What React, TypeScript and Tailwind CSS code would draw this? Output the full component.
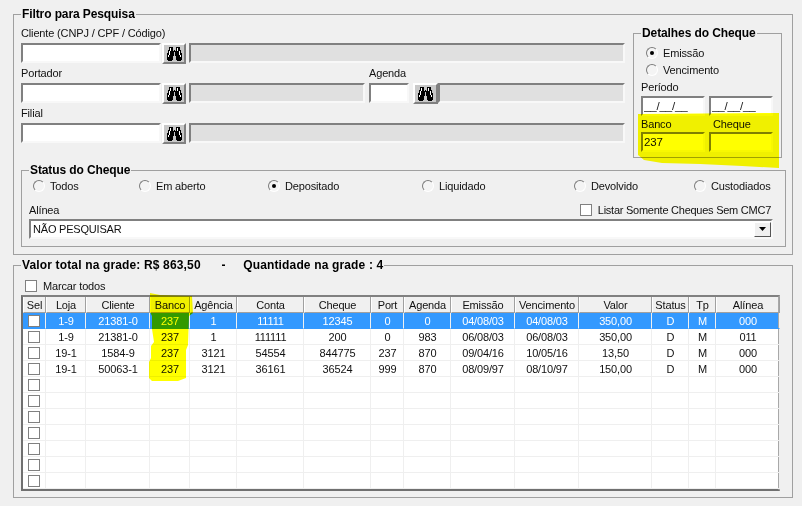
import type { ReactNode } from "react";

const columns = [
  { title: "Sel", width: 23 },
  { title: "Loja", width: 40 },
  { title: "Cliente", width: 64 },
  { title: "Banco", width: 40 },
  { title: "Agência", width: 47 },
  { title: "Conta", width: 67 },
  { title: "Cheque", width: 67 },
  { title: "Port", width: 33 },
  { title: "Agenda", width: 47 },
  { title: "Emissão", width: 64 },
  { title: "Vencimento", width: 64 },
  { title: "Valor", width: 73 },
  { title: "Status", width: 37 },
  { title: "Tp", width: 27 },
  { title: "Alínea", width: 64 },
];

const rows = [
  ["1-9", "21381-0", "237", "1", "11111", "12345", "0", "0", "04/08/03", "04/08/03", "350,00", "D", "M", "000"],
  ["1-9", "21381-0", "237", "1", "111111", "200", "0", "983", "06/08/03", "06/08/03", "350,00", "D", "M", "011"],
  ["19-1", "1584-9", "237", "3121", "54554", "844775", "237", "870", "09/04/16", "10/05/16", "13,50", "D", "M", "000"],
  ["19-1", "50063-1", "237", "3121", "36161", "36524", "999", "870", "08/09/97", "08/10/97", "150,00", "D", "M", "000"],
  ...Array.from({ length: 7 }, () => Array.from({ length: 14 }, () => "")),
];

const gridCols =
  "grid grid-cols-[23px_40px_64px_40px_47px_67px_67px_33px_47px_64px_64px_73px_37px_27px_64px]";

const sunken =
  "block h-5 border-2 border-t-[#808080] border-l-[#808080] border-r-[#f8f8f8] border-b-[#f8f8f8] px-[1px] text-[11.5px] outline-none";

// o = white highlight
const binoculars = [
  "..####...####..",
  "..#o##...#o##..",
  "..#o##...#o##..",
  ".##o##.#.#o###.",
  ".#o#########o#.",
  ".#o####.####o#.",
  "##o####.####o##",
  "##o####.####o##",
  "#o#####.#####o#",
  "#o####...####o#",
  "######...######",
  "######...######",
  "######...######",
  ".####.....####.",
];

function Binoculars() {
  return (
    <svg width="15" height="14" viewBox="0 0 15 14" shapeRendering="crispEdges">
      {binoculars.map((line, y) =>
        line.split("").map((c, x) =>
          c === "." ? null : <rect key={`${x}-${y}`} x={x} y={y} width="1" height="1" fill={c === "#" ? "#000" : "#fff"} />
        )
      )}
    </svg>
  );
}

function SearchButton({ wide }: { wide?: boolean }) {
  return (
    <button
      className={`flex h-[21px] ${wide ? "w-[25px]" : "w-6"} shrink-0 items-center justify-center border-2 border-t-white border-l-white border-r-[#808080] border-b-[#808080] bg-[#c8c8c8]`}
    >
      <Binoculars />
    </button>
  );
}

function Group({
  title,
  className,
  titleClass,
  children,
}: {
  title: string;
  className?: string;
  titleClass?: string;
  children: ReactNode;
}) {
  return (
    <fieldset className={`min-w-0 border border-[#a0a0a0] ${className ?? ""}`}>
      <legend className={`whitespace-pre px-[1px] text-[12px] font-bold leading-[14px] text-black ${titleClass ?? "tracking-[-0.1px]"}`}>
        {title}
      </legend>
      {children}
    </fieldset>
  );
}

function Radio({ label, checked, className }: { label: string; checked?: boolean; className?: string }) {
  return (
    <div className={`flex h-[14px] items-center gap-[5px] ${className ?? ""}`}>
      <span className="flex size-3 items-center justify-center rounded-full border border-t-[#7c7c7c] border-l-[#7c7c7c] border-r-white border-b-white bg-[#f4f4f4]">
        {checked && <span className="size-[4px] rounded-full bg-black" />}
      </span>
      <span>{label}</span>
    </div>
  );
}

function Check({ className }: { className?: string }) {
  return <span className={`block size-3 border border-[#808080] bg-white ${className ?? ""}`} />;
}

function Field({ label, children }: { label: string; children: ReactNode }) {
  return (
    <div className="h-10">
      <div className="h-[17px] leading-[14px]">{label}</div>
      {children}
    </div>
  );
}

export default function App() {
  return (
    <div className="relative isolate h-[506px] w-[802px] overflow-hidden bg-[#f0f0f0] px-[13px] pt-[7px] font-['Liberation_Sans',sans-serif] text-[11px] tracking-[-0.15px] text-[#111]">
      <Group title="Filtro para Pesquisa" className="h-[248px] w-[780px] pl-[7px] pr-[6px]">
        <div className="flex h-[142px] items-start">
          <div className="w-[604px] pt-[5px]">
            <Field label="Cliente (CNPJ / CPF / Código)">
              <div className="flex">
                <input readOnly className={`${sunken} w-[140px] bg-white`} />
                <div className="ml-[1px]">
                  <SearchButton />
                </div>
                <input readOnly className={`${sunken} ml-[3px] min-w-0 flex-1 bg-[#e0e0e0]`} />
              </div>
            </Field>
            <div className="flex">
              <div className="w-[344px]">
                <Field label="Portador">
                  <div className="flex">
                    <input readOnly className={`${sunken} w-[140px] bg-white`} />
                    <div className="ml-[1px]">
                      <SearchButton />
                    </div>
                    <input readOnly className={`${sunken} ml-[3px] w-[176px] bg-[#e0e0e0]`} />
                  </div>
                </Field>
              </div>
              <div className="ml-[4px] flex-1">
                <Field label="Agenda">
                  <div className="flex">
                    <input readOnly className={`${sunken} w-10 bg-white`} />
                    <div className="ml-1">
                      <SearchButton wide />
                    </div>
                    <input readOnly className={`${sunken} min-w-0 flex-1 bg-[#e0e0e0]`} />
                  </div>
                </Field>
              </div>
            </div>
            <Field label="Filial">
              <div className="flex">
                <input readOnly className={`${sunken} w-[140px] bg-white`} />
                <div className="ml-[1px]">
                  <SearchButton />
                </div>
                <input readOnly className={`${sunken} ml-[3px] min-w-0 flex-1 bg-[#e0e0e0]`} />
              </div>
            </Field>
          </div>

          <Group title="Detalhes do Cheque" className="ml-2 mt-[5px] h-[132px] w-[149px] pl-[7px]">
            <div className="flex flex-col gap-[3px] pl-[5px] pt-[6px]">
              <Radio label="Emissão" checked />
              <Radio label="Vencimento" />
            </div>
            <div className="mt-[2px] h-[16px] leading-[16px]">Período</div>
            <div className="mt-[1px] flex gap-1">
              <input readOnly value="__/__/__" className={`${sunken} w-16 bg-white`} />
              <input readOnly value="__/__/__" className={`${sunken} w-16 bg-white`} />
            </div>
            <div className="mt-[1px] flex h-[15px] leading-[15px]">
              <span className="w-[72px]">Banco</span>
              <span>Cheque</span>
            </div>
            <div className="flex gap-1">
              <input readOnly value="237" className={`${sunken} w-16 bg-white`} />
              <input readOnly className={`${sunken} w-16 bg-white`} />
            </div>
          </Group>
        </div>

        <Group title="Status do Cheque" className="w-[765px] pb-[7px] pl-[7px] pr-[11px]">
          <div className="flex pl-1 pt-[2px]">
            <Radio label="Todos" className="w-[106px]" />
            <Radio label="Em aberto" className="w-[129px]" />
            <Radio label="Depositado" checked className="w-[154px]" />
            <Radio label="Liquidado" className="w-[152px]" />
            <Radio label="Devolvido" className="w-[120px]" />
            <Radio label="Custodiados" />
          </div>
          <div className="mt-[10px] flex h-[16px] justify-between">
            <span className="leading-[14px]">Alínea</span>
            <div className="mr-[3px] flex h-[14px] items-center gap-[6px] tracking-[-0.25px]">
              <Check />
              <span>Listar Somente Cheques Sem CMC7</span>
            </div>
          </div>
          <div className="flex h-5 w-[744px] items-center justify-between border-2 border-t-[#808080] border-l-[#808080] border-r-[#f8f8f8] border-b-[#f8f8f8] bg-white pl-[2px]">
            <span className="tracking-[-0.2px]">NÃO PESQUISAR</span>
            <span className="flex h-[15px] w-[17px] items-center justify-center border border-t-white border-l-white border-r-[#555] border-b-[#555] bg-[#f0f0f0]">
              <svg width="7" height="4" viewBox="0 0 7 4">
                <path d="M0 0h7L3.5 4z" fill="#000" />
              </svg>
            </span>
          </div>
        </Group>
      </Group>

      <Group
        title="Valor total na grade: R$ 863,50      -     Quantidade na grade : 4"
        titleClass="tracking-[0.15px]"
        className="mt-[3px] h-[240px] w-[780px] pl-[7px]"
      >
        <div className="mt-[7px] flex h-[14px] items-center gap-[6px] pl-1">
          <Check />
          <span>Marcar todos</span>
        </div>
        <div className="mt-[2px] w-[759px] border-2 border-t-[#808080] border-l-[#707070] border-r-[#a8a8a8] border-b-[#707070] bg-white">
          <div className={`${gridCols} h-4 bg-[#f0f0f0]`}>
            {columns.map((c) => (
              <div
                key={c.title}
                className="overflow-hidden whitespace-nowrap border-l border-r border-b border-l-white border-r-[#a0a0a0] border-b-[#a0a0a0] pt-[1px] text-center leading-[14px]"
              >
                {c.title}
              </div>
            ))}
          </div>
          {rows.map((row, i) => (
            <div key={i} className={`${gridCols} h-4 ${i === 0 ? "bg-[#3399ff] text-white" : ""}`}>
              <div className={`flex items-center justify-center border-r border-b pr-[1px] ${i === 0 ? "border-r-[#f0f0f0] border-b-[#3399ff]" : "border-[#efefef]"}`}>
                <Check />
              </div>
              {row.map((value, j) => (
                <div
                  key={j}
                  className={`border-r border-b pl-[1px] pt-[1px] text-center leading-[14px] ${i === 0 ? "border-r-[#f0f0f0] border-b-[#3399ff]" : "border-[#efefef]"}`}
                >
                  {value}
                </div>
              ))}
            </div>
          ))}
        </div>
      </Group>

      <svg className="pointer-events-none absolute inset-0 mix-blend-multiply" width="802" height="506" viewBox="0 0 802 506">
        <path d="M638 114 L779 113 L779 168 L742 166 L700 164 L662 163 L644 160 L638 155 Z" fill="#ffff00" />
        <path
          d="M150 293 L160 295 L192 296 L193 313 L189 316 L188 345 L186 350 L186 378 L178 381 L152 381 L149 378 L149 362 L151 358 L151 346 L154 342 L152 329 L152 316 L150 312 Z"
          fill="#ffff00"
        />
      </svg>
    </div>
  );
}
